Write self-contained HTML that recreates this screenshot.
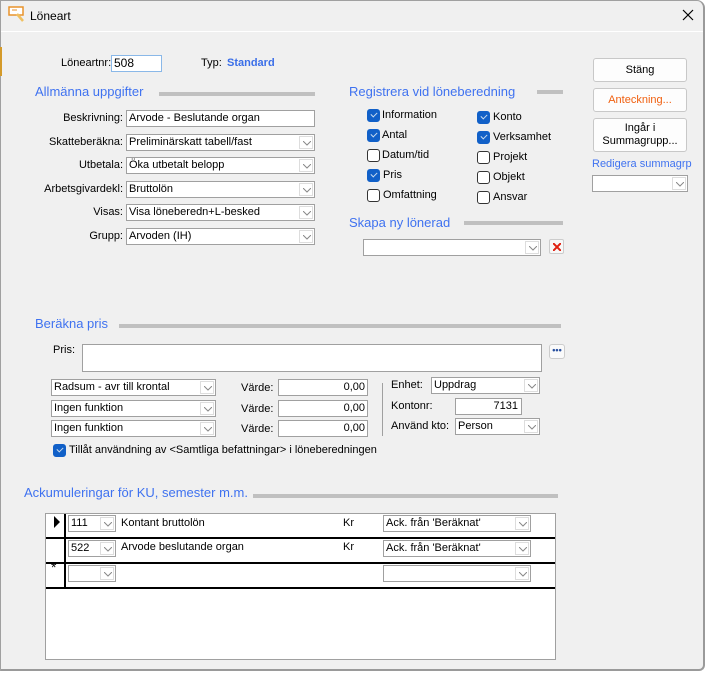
<!DOCTYPE html><html><head><meta charset="utf-8"><style>
*{box-sizing:border-box;margin:0;padding:0}
body{width:711px;height:676px;background:#fff;font-family:"Liberation Sans",sans-serif;font-size:11px;color:#000;position:relative;overflow:hidden}
.a{position:absolute}
.win{left:0;top:0;width:705px;height:671px;background:#f0f0f0;border:1px solid #a0a0a0;border-right:2px solid #9a9a9a;border-bottom:2px solid #9a9a9a;border-radius:0 8px 6px 0}
.h{position:absolute;color:#3f72f0;font-size:13px;line-height:15px;white-space:nowrap}
.bar{position:absolute;height:4px;background:#c0c0c0}
.in{position:absolute;background:#fff;border:1px solid #a0a0a0;height:17px;line-height:15px;padding-left:2px;white-space:nowrap;overflow:hidden}
.cb{position:absolute;background:#fff;border:1px solid #a0a0a0;height:17px;line-height:15px;padding-left:2px;white-space:nowrap}
.cb:after{content:"";position:absolute;right:0;top:0;width:15px;height:15px;border-left:1px solid #d8d8d8;background:#fff url("data:,") }
.dd{position:absolute;right:1px;top:1px;width:14px;height:13px;border:1px solid #ddd;z-index:2}
.dd svg{position:absolute;left:3px;top:4px}
.l{position:absolute;white-space:nowrap;line-height:13px}
.r{text-align:right}
.ck{position:absolute;width:13px;height:13px;border-radius:3px;border:1px solid #333;background:#fff}
.ck.on{background:#1160c8;border-color:#1160c8}
.ck.on:after{content:"";position:absolute;left:3px;top:2px;width:5px;height:3px;border-left:1px solid #cde;border-bottom:1px solid #cde;transform:rotate(-45deg)}
.btn{position:absolute;background:#fdfdfd;border:1px solid #c8c8c8;border-radius:3px;text-align:center;font-size:11px}
.gl{position:absolute;background:#000;height:2px}
</style></head><body>
<div class="a win"></div>
<div class="a" style="left:0;top:47px;width:2px;height:29px;background:#d49a2a"></div>
<div class="a" style="left:1px;top:31px;width:702px;height:1px;background:#fff"></div>
<svg class="a" style="left:8px;top:6px" width="18" height="16"><rect x="1" y="1" width="14" height="8" fill="#fff" stroke="#e8922a" stroke-width="1.5"/><line x1="4" y1="4" x2="9" y2="4" stroke="#e8922a"/><line x1="9" y1="8" x2="15" y2="15" stroke="#f0c060" stroke-width="2.5"/></svg>
<div class="l" style="left:30px;top:10px;font-size:12px">Löneart</div>
<svg class="a" style="left:682px;top:9px" width="12" height="12"><path d="M1 1L11 11M11 1L1 11" stroke="#000" stroke-width="1.2"/></svg>

<div class="l" style="left:61px;top:57px">Löneartnr:</div>
<div class="in" style="left:111px;top:55px;width:51px;border-color:#8ab8e8;font-size:12px">508</div>
<div class="l" style="left:201px;top:57px">Typ:</div>
<div class="l" style="left:227px;top:57px;color:#3a6ee8;font-weight:bold">Standard</div>

<div class="h" style="left:35px;top:84px">Allmänna uppgifter</div><div class="bar" style="left:159px;top:92px;width:156px"></div>
<div class="l r" style="left:40px;width:83px;top:112px">Beskrivning:</div>
<div class="in" style="left:126px;top:110px;width:189px">Arvode - Beslutande organ</div>
<div class="l r" style="left:20px;width:103px;top:136px">Skatteberäkna:</div>
<div class="in" style="left:126px;top:134px;width:189px">Preliminärskatt tabell/fast<div class="dd"><svg width="8" height="5"><path d="M0 0L4 4L8 0" stroke="#888" fill="none"/></svg></div></div>
<div class="l r" style="left:20px;width:103px;top:159px">Utbetala:</div>
<div class="in" style="left:126px;top:157px;width:189px">Öka utbetalt belopp<div class="dd"><svg width="8" height="5"><path d="M0 0L4 4L8 0" stroke="#888" fill="none"/></svg></div></div>
<div class="l r" style="left:20px;width:103px;top:183px">Arbetsgivardekl:</div>
<div class="in" style="left:126px;top:181px;width:189px">Bruttolön<div class="dd"><svg width="8" height="5"><path d="M0 0L4 4L8 0" stroke="#888" fill="none"/></svg></div></div>
<div class="l r" style="left:20px;width:103px;top:206px">Visas:</div>
<div class="in" style="left:126px;top:204px;width:189px">Visa löneberedn+L-besked<div class="dd"><svg width="8" height="5"><path d="M0 0L4 4L8 0" stroke="#888" fill="none"/></svg></div></div>
<div class="l r" style="left:20px;width:103px;top:230px">Grupp:</div>
<div class="in" style="left:126px;top:228px;width:189px">Arvoden (IH)<div class="dd"><svg width="8" height="5"><path d="M0 0L4 4L8 0" stroke="#888" fill="none"/></svg></div></div>

<div class="h" style="left:349px;top:84px">Registrera vid löneberedning</div><div class="bar" style="left:537px;top:90px;width:26px"></div>
<div class="ck on" style="left:367px;top:109px"></div><div class="l" style="left:382px;top:109px">Information</div>
<div class="ck on" style="left:367px;top:129px"></div><div class="l" style="left:382px;top:129px">Antal</div>
<div class="ck" style="left:367px;top:149px"></div><div class="l" style="left:382px;top:149px">Datum/tid</div>
<div class="ck on" style="left:367px;top:169px"></div><div class="l" style="left:383px;top:169px">Pris</div>
<div class="ck" style="left:367px;top:189px"></div><div class="l" style="left:383px;top:189px">Omfattning</div>
<div class="ck on" style="left:477px;top:111px"></div><div class="l" style="left:493px;top:111px">Konto</div>
<div class="ck on" style="left:477px;top:131px"></div><div class="l" style="left:493px;top:131px">Verksamhet</div>
<div class="ck" style="left:477px;top:151px"></div><div class="l" style="left:493px;top:151px">Projekt</div>
<div class="ck" style="left:477px;top:171px"></div><div class="l" style="left:493px;top:171px">Objekt</div>
<div class="ck" style="left:477px;top:191px"></div><div class="l" style="left:493px;top:191px">Ansvar</div>
<div class="h" style="left:349px;top:215px">Skapa ny lönerad</div><div class="bar" style="left:464px;top:221px;width:99px"></div>
<div class="in" style="left:363px;top:239px;width:178px"><div class="dd"><svg width="8" height="5"><path d="M0 0L4 4L8 0" stroke="#888" fill="none"/></svg></div></div>
<div class="a" style="left:549px;top:239px;width:15px;height:15px;border:1px solid #ccc;border-radius:2px;background:#f8f8f8"><svg style="position:absolute;left:3px;top:3px" width="8" height="8"><path d="M0 0L8 8M8 0L0 8" stroke="#e02010" stroke-width="2"/></svg></div>

<div class="btn" style="left:593px;top:58px;width:94px;height:24px;line-height:22px">Stäng</div>
<div class="btn" style="left:593px;top:88px;width:94px;height:24px;line-height:22px;color:#f06010">Anteckning...</div>
<div class="btn" style="left:593px;top:118px;width:94px;height:34px;line-height:13px;padding-top:3px">Ingår i<br>Summagrupp...</div>
<div class="l" style="left:592px;top:158px;color:#3f72f0">Redigera summagrp</div>
<div class="in" style="left:592px;top:175px;width:96px"><div class="dd"><svg width="8" height="5"><path d="M0 0L4 4L8 0" stroke="#888" fill="none"/></svg></div></div>

<div class="h" style="left:35px;top:316px">Beräkna pris</div><div class="bar" style="left:119px;top:324px;width:442px"></div>
<div class="l" style="left:53px;top:344px">Pris:</div>
<div class="in" style="left:82px;top:344px;width:460px;height:28px"></div>
<div class="a" style="left:549px;top:344px;width:16px;height:15px;border:1px solid #ccc;border-radius:3px;background:#fafafa;color:#2850a0;font-size:9px;line-height:11px;text-align:center;font-weight:bold">•••</div>
<div class="in" style="left:51px;top:379px;width:165px">Radsum - avr till krontal<div class="dd"><svg width="8" height="5"><path d="M0 0L4 4L8 0" stroke="#888" fill="none"/></svg></div></div>
<div class="in" style="left:51px;top:400px;width:165px">Ingen funktion<div class="dd"><svg width="8" height="5"><path d="M0 0L4 4L8 0" stroke="#888" fill="none"/></svg></div></div>
<div class="in" style="left:51px;top:420px;width:165px">Ingen funktion<div class="dd"><svg width="8" height="5"><path d="M0 0L4 4L8 0" stroke="#888" fill="none"/></svg></div></div>
<div class="l" style="left:241px;top:382px">Värde:</div><div class="in r" style="left:278px;top:379px;width:90px;padding-right:2px">0,00</div>
<div class="l" style="left:241px;top:403px">Värde:</div><div class="in r" style="left:278px;top:400px;width:90px;padding-right:2px">0,00</div>
<div class="l" style="left:241px;top:423px">Värde:</div><div class="in r" style="left:278px;top:420px;width:90px;padding-right:2px">0,00</div>
<div class="a" style="left:382px;top:383px;width:1px;height:53px;background:#a0a0a0"></div>
<div class="l" style="left:391px;top:379px">Enhet:</div>
<div class="in" style="left:431px;top:377px;width:109px">Uppdrag<div class="dd"><svg width="8" height="5"><path d="M0 0L4 4L8 0" stroke="#888" fill="none"/></svg></div></div>
<div class="l" style="left:391px;top:400px">Kontonr:</div>
<div class="in r" style="left:455px;top:398px;width:67px;padding-right:3px">7131</div>
<div class="l" style="left:391px;top:420px">Använd kto:</div>
<div class="in" style="left:455px;top:418px;width:85px">Person<div class="dd"><svg width="8" height="5"><path d="M0 0L4 4L8 0" stroke="#888" fill="none"/></svg></div></div>
<div class="ck on" style="left:53px;top:444px"></div><div class="l" style="left:69px;top:444px">Tillåt användning av &lt;Samtliga befattningar&gt; i löneberedningen</div>

<div class="h" style="left:24px;top:485px">Ackumuleringar för KU, semester m.m.</div><div class="bar" style="left:253px;top:494px;width:305px"></div>
<div class="a" style="left:45px;top:513px;width:511px;height:147px;background:#fff;border:1px solid #a0a0a0"></div>
<div class="a" style="left:64px;top:514px;width:2px;height:74px;background:#000"></div>
<div class="gl" style="left:46px;top:537px;width:509px"></div>
<div class="gl" style="left:46px;top:562px;width:509px"></div>
<div class="gl" style="left:46px;top:587px;width:509px"></div>
<svg class="a" style="left:54px;top:516px" width="7" height="12"><path d="M0 0L6 6L0 12Z" fill="#000"/></svg>
<div class="l" style="left:51px;top:561px;font-size:14px">*</div>
<div class="in" style="left:68px;top:515px;width:48px">111<div class="dd"><svg width="8" height="5"><path d="M0 0L4 4L8 0" stroke="#888" fill="none"/></svg></div></div>
<div class="in" style="left:68px;top:540px;width:48px">522<div class="dd"><svg width="8" height="5"><path d="M0 0L4 4L8 0" stroke="#888" fill="none"/></svg></div></div>
<div class="in" style="left:68px;top:565px;width:48px"><div class="dd"><svg width="8" height="5"><path d="M0 0L4 4L8 0" stroke="#888" fill="none"/></svg></div></div>
<div class="l" style="left:121px;top:517px">Kontant bruttolön</div>
<div class="l" style="left:121px;top:541px">Arvode beslutande organ</div>
<div class="l" style="left:343px;top:517px">Kr</div><div class="l" style="left:343px;top:541px">Kr</div>
<div class="in" style="left:383px;top:515px;width:148px">Ack. från 'Beräknat'<div class="dd"><svg width="8" height="5"><path d="M0 0L4 4L8 0" stroke="#888" fill="none"/></svg></div></div>
<div class="in" style="left:383px;top:540px;width:148px">Ack. från 'Beräknat'<div class="dd"><svg width="8" height="5"><path d="M0 0L4 4L8 0" stroke="#888" fill="none"/></svg></div></div>
<div class="in" style="left:383px;top:565px;width:148px"><div class="dd"><svg width="8" height="5"><path d="M0 0L4 4L8 0" stroke="#888" fill="none"/></svg></div></div>
</body></html>
